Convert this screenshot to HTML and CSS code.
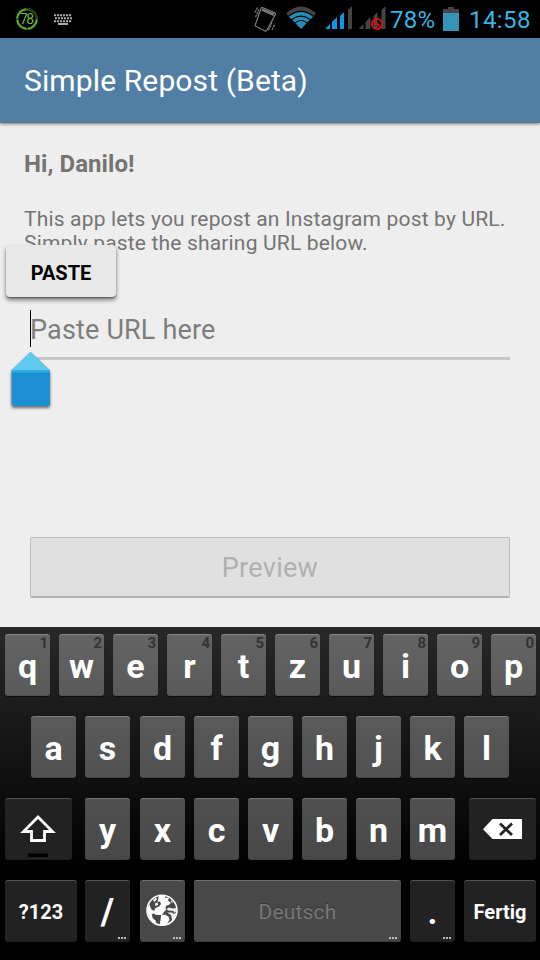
FILE: index.html
```html
<!DOCTYPE html>
<html lang="en">
<head>
<meta charset="utf-8">
<title>Simple Repost (Beta)</title>
<link rel="stylesheet" href="styles.css">
</head>
<body>
<div class="screen">
  <div class="status">
    <svg class="ring" width="24" height="24" viewBox="0 0 24 24"><circle cx="12" cy="12" r="9.8" fill="none" stroke="#203c18" stroke-width="2"/><circle cx="12" cy="12" r="9.8" fill="none" stroke="#5bad2d" stroke-width="2" stroke-dasharray="14.2 1.2" transform="rotate(2 12 12)" pathLength="61.6"/><path d="M12.9 2.2A9.8 9.8 0 0 1 21.7 11" fill="none" stroke="#203c18" stroke-width="2.3"/><text x="12" y="16.8" text-anchor="middle" textLength="14">78</text></svg>
    <svg class="kbd" width="18" height="11" viewBox="0 0 18 11"><g stroke="#aaa" stroke-width="2"><path d="M0 1.2h18M0 7.3h18" stroke-dasharray="2.1 .9"/><path d="M1 4.2h17" stroke-dasharray="2.1 .9"/><path d="M4 10h10"/></g></svg>
    <svg class="tray" width="136" height="30" viewBox="0 0 136 30">
      <g fill="none" stroke="#777" stroke-width="1.3"><path d="M8.500 3.500 20.500 8.700Q22 9.500 21.300 10.800L13 26Q12.300 27.500 11 27L2 22.200Q.8 21.500 1.500 20.200L7 4.500Q7.500 3 8.500 3.500Z"/><path d="M8 5.500 20 10.700" stroke-width="2.600"/><path d="M1 8.500 3.500 3.500M1.500 13 5 5.500M14.500 26 18 18.500M18 26 21 20" stroke-dasharray="2.500 .7"/></g>
      <path d="M32 9.500Q47 -4.500 62 9.500L57.800 14Q47 5 36.200 14Z" fill="#444"/>
      <path d="M34.500 12.200Q47 2.500 59.500 12.200L47 25Z" fill="#258cb5"/>
      <g fill="none" stroke="#000" stroke-width="1.1"><path d="M34.500 12.300Q47 2.500 59.500 12.300M37.500 15.700Q47 8.500 56.500 15.700M41 19Q47 14 53 19"/></g>
      <path d="M71 25h5v-5ZM78 25h5V13l-5 5ZM86 25h4V8l-4 4Z" fill="#0b99e5"/><path d="M94 25h4V2l-4 4Z" fill="#444"/>
      <path d="M105 25h5v-5ZM112 25h5V13l-5 5ZM120 25h4V8l-4 4ZM128 25h4V2l-4 4Z" transform="translate(-.5)" fill="#444"/>
      <g fill="none" stroke="#d31515" stroke-width="2"><circle cx="123" cy="20" r="5"/><path d="m119.500 16.500 7 7"/></g>
    </svg>
    <span class="percent">78%</span>
    <svg class="battery" width="16" height="24" viewBox="0 0 16 24"><path d="M5 0h6v2h5v4H0V2h5z" fill="#444"/><path d="M0 6h16v18H0z" fill="#3694bb"/></svg>
    <span class="clock">14:58</span>
  </div>
  <header class="bar"><span class="title">Simple Repost (Beta)</span></header>
  <main class="content">
    <div class="hello">Hi, Danilo!</div>
    <div class="intro">This app lets you repost an Instagram post by URL.<br>Simply paste the sharing URL below.</div>
    <div class="field"><span>Paste URL here</span></div>
    <div class="preview"><span>Preview</span></div>
    <div class="paste"><span>PASTE</span></div>
    <i class="caret"></i>
    <svg class="handle" width="50" height="66" viewBox="0 0 50 66"><g class="shade"><path d="M25.500 6 45 24.500V58q0 2-2 2H8.500q-2 0-2-2V24.500Z" fill="#1e90d2"/></g><path d="M25.500 6 45 24.500H6.500Z" fill="#60caee"/><path d="M6.500 24.500H45v2H6.500z" fill="#30abdf"/></svg>
  </main>
  <div class="keyboard">
    <div class="row r1"><div class="key">q<sup>1</sup></div><div class="key">w<sup>2</sup></div><div class="key">e<sup>3</sup></div><div class="key">r<sup>4</sup></div><div class="key">t<sup>5</sup></div><div class="key">z<sup>6</sup></div><div class="key">u<sup>7</sup></div><div class="key">i<sup>8</sup></div><div class="key">o<sup>9</sup></div><div class="key">p<sup>0</sup></div></div>
    <div class="row r2"><div class="key">a</div><div class="key">s</div><div class="key">d</div><div class="key">f</div><div class="key">g</div><div class="key">h</div><div class="key">j</div><div class="key">k</div><div class="key">l</div></div>
    <div class="row r3"><div class="key dark"><svg width="67" height="62" viewBox="0 0 67 62"><path d="M33 19 47.500 33.500H39.500V42.500H26.500V33.500H18.500Z" fill="none" stroke="#fff" stroke-width="2.800"/><path d="M23 55.500h20v3.500H23z" fill="#000"/></svg></div><div class="key">y</div><div class="key">x</div><div class="key">c</div><div class="key">v</div><div class="key">b</div><div class="key">n</div><div class="key">m</div><div class="key dark"><svg width="67" height="62" viewBox="0 0 67 62"><path d="M14 31.300 23.500 21H53V41H23.500Z" fill="#fff"/><path d="m31 25.500 12 11.500m0-11.500L31 37" stroke="#222" stroke-width="2.800"/></svg></div></div>
    <div class="row r4"><div class="key dark word">?123</div><div class="key dark slash">/<i class="more"></i></div><div class="key"><svg width="45" height="62" viewBox="0 0 45 62"><circle cx="22" cy="30.300" r="15" fill="#484848" stroke="#fff" stroke-width="1.600"/><g fill="#fff"><path d="M19 15.500 26 15 25 18 29 17.500 28 20.500 31 23 28 25.500 27 25 25.500 27 26 30 24 32 22 35 17 35 13 33.500 11 35 8 34 7.300 28 9.500 24 11 29 14 31 15.500 28 19 26.500 21 24 20 21.500 17.500 22Z"/><path d="M13 20 16 17.500 17 19 14.500 22ZM15 23.500 17.500 22.500 18 25 15.500 26ZM31 20 33 22 31.500 23Z"/><path d="M21 35.500 25 34.500 29 37 29.500 40 27 43.500 24.500 45.500 19.500 45 20.500 40.500Z"/><path d="M8 33.500 12 34.500 12.500 38 15.500 40.500 17 45 11.500 41.500Z"/><path d="M29 27.500 32.500 28.500 36.500 28 36.500 31 34.500 33 33.500 31 28 30.500 26.500 29Z M27 32.500 31 35 32.500 42 36 37.500 36.800 32 34 34 32 32.500Z" opacity=".9"/></g></svg><i class="more"></i></div><div class="key space"><span>Deutsch</span><i class="more"></i></div><div class="key dark">.<i class="more"></i></div><div class="key dark word">Fertig</div></div>
  </div>
</div>
</body>
</html>
```
FILE: styles.css
```css
* { box-sizing: border-box; }
body { margin: 0; font-family: Roboto, sans-serif; background: #eee; }
.screen { width: 540px; height: 960px; display: flex; flex-direction: column; overflow: hidden; }
.status { height: 38px; flex: none; background: #000; display: flex; align-items: center; color: #33b5e5; font-size: 24px; letter-spacing: .3px; }
.ring { margin-left: 15px; }
.ring text { font-size: 14px; letter-spacing: 0; fill: #70b845; }
.kbd { margin-left: 15px; }
.tray { margin-left: 182px; }
.percent { width: 45px; white-space: nowrap; padding-top: 2px; }
.battery { margin-left: 8px; }
.clock { margin-left: 10px; padding-top: 2px; letter-spacing: .4px; }
.bar { height: 85px; flex: none; background: #517ea4; display: flex; align-items: center; padding-left: 24px; color: #fff; font-size: 30px; letter-spacing: .12px; border-bottom: 1px solid #58768f; box-shadow: 0 1px 3px rgba(0,0,0,.5); z-index: 1; }
.title { white-space: nowrap; }
.content { height: 504px; flex: none; position: relative; padding: 26px 30px 0; display: flex; flex-direction: column; color: #747474; }
.hello { margin-left: -6px; font-size: 24px; line-height: 30px; font-weight: 700; letter-spacing: .08px; }
.intro { margin: 28px -6px 0; font-size: 21px; line-height: 24px; letter-spacing: .17px; white-space: nowrap; }
.field { margin-top: 48px; height: 57px; border-bottom: 3px solid #c7c7c7; font-size: 27px; line-height: 54px; letter-spacing: .17px; color: #7d7d7d; }
.preview { margin-top: 177px; height: 61px; border: 1px solid #bdbdbd; border-bottom: 2px solid #b2b2b2; border-radius: 2px; background: #e0e0e0; display: flex; align-items: center; justify-content: center; padding-top: 2px; font-size: 27px; letter-spacing: .3px; color: #b0b0b0; }
.paste { position: absolute; left: 6px; top: 122px; width: 110px; height: 52px; padding-top: 3px; border-radius: 4px; background: #e8e8e8; box-shadow: 0 3px 4px rgba(0,0,0,.5), 0 1px 1px rgba(0,0,0,.3); color: #000; font-size: 20px; font-weight: 700; display: flex; align-items: center; justify-content: center; }
.caret { position: absolute; left: 30px; top: 187px; width: 1px; height: 37px; background: #000; }
.handle { position: absolute; left: 5px; top: 223px; }
.shade { filter: drop-shadow(0 2px 1.5px rgba(0,0,0,.55)); }
.keyboard { height: 333px; flex: none; padding: 7px 4px 0 5px; background: linear-gradient(#282828, #111 43%, #000 74%); display: flex; flex-direction: column; gap: 20px; color: #fff; }
.row { display: grid; height: 62px; column-gap: 9px; }
.r1 { grid-template-columns: repeat(10, 45px); }
.r2 { grid-template-columns: 45px 46px repeat(7, 45px); padding-left: 26px; }
.r2 .key:nth-child(2), .r3 .key:nth-child(2), .r4 .key:nth-child(2) { margin-right: 1px; }
.r3 { grid-template-columns: 71px 46px repeat(6, 45px) 72px; }
.r3 .key:first-child { width: 67px; }
.r3 .key:last-child { width: 67px; margin-left: 5px; }
.r4 { grid-template-columns: 71px 46px 45px 207px 45px 72px; }
.r4 .key:first-child { width: 72px; }
.key { position: relative; height: 62px; border-radius: 3px; display: flex; align-items: center; justify-content: center; font-size: 34px; font-weight: 700; padding-top: 1px; box-shadow: inset 0 1px rgba(255,255,255,.22), inset 0 -1px rgba(0,0,0,.1), 0 1px 1px rgba(0,0,0,.6); }
.r1 .key { background: linear-gradient(#646464, #5a5a5a); }
.r2 .key { background: linear-gradient(#5a5a5a, #505050); }
.r3 .key { background: linear-gradient(#505050, #484848); }
.r4 .key { background: #484848; }
.row .key.dark { background: #222; }
.key svg { position: absolute; left: 0; top: 0; }
.key sup { position: absolute; right: 2px; top: 1px; font-size: 15px; line-height: 17px; color: #333; }
.row .word { font-size: 20px; padding-top: 2px; }
.row .slash { font-size: 36px; }
.row .space { font-size: 21px; font-weight: 400; color: #777; text-shadow: 0 -1px #333; letter-spacing: .2px; }
.more { position: absolute; right: 4px; bottom: 3px; width: 8px; height: 2px; background: repeating-linear-gradient(90deg, #bbb 0 2px, transparent 2px 3px); }
```
